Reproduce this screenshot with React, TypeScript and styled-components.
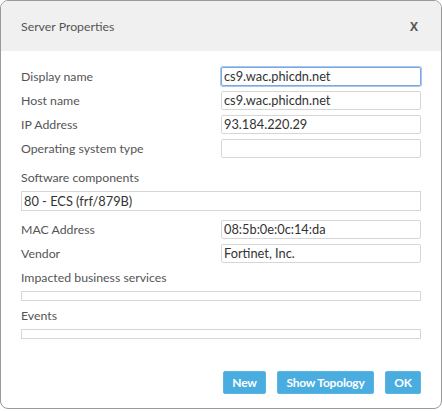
import styled, { createGlobalStyle } from "styled-components";

const GlobalStyle = createGlobalStyle`
  html, body {
    margin: 0;
    padding: 0;
    background: #ffffff;
  }
  body {
    font-family: Lato, "Open Sans", "Liberation Sans", sans-serif;
  }
`;

const Dialog = styled.div`
  width: 440px;
  height: 407px;
  border: 1px solid #999999;
  border-radius: 8px;
  overflow: hidden;
  background: #ffffff;
  display: flex;
  flex-direction: column;
`;

const Header = styled.div`
  height: 50px;
  flex: none;
  background: #f0f0f0;
  display: flex;
  align-items: center;
  justify-content: space-between;
  padding: 0 23px 0 20px;
  color: #555555;
  font-size: 12.3px;
`;

const CloseButton = styled.span`
  font-family: "Open Sans", "Liberation Sans", sans-serif;
  font-weight: bold;
  font-size: 12px;
  cursor: pointer;
`;

const Body = styled.div`
  padding: 16px 20px 0 20px;
  display: flex;
  flex-direction: column;
  flex: 1;
`;

const Row = styled.div`
  display: grid;
  grid-template-columns: 200px 200px;
  align-items: center;
  height: 19px;
  margin-bottom: 5px;
`;

const Label = styled.label<{ $top?: number }>`
  color: #555555;
  font-size: 12.3px;
  line-height: 19px;
  margin-top: ${(p) => p.$top ?? 0}px;
`;

const Input = styled.div<{ $focused?: boolean }>`
  box-sizing: border-box;
  height: 19px;
  border: 1px solid ${(p) => (p.$focused ? "#7aa7e0" : "#d6d6d6")};
  box-shadow: ${(p) => (p.$focused ? "0 0 0 1px #a9c7ee" : "none")};
  border-radius: 2px;
  padding: 0 2px;
  color: #333333;
  font-size: 12.8px;
  line-height: 17px;
  white-space: nowrap;
  overflow: hidden;
`;

const WideBox = styled.div<{ $height: number }>`
  box-sizing: border-box;
  height: ${(p) => p.$height}px;
  border: 1px solid #d6d6d6;
  margin-top: 4px;
  padding: 0 2px;
  color: #333333;
  font-size: 12.8px;
  line-height: 18px;
`;

const Spacer = styled.div`
  height: 9px;
`;

const Footer = styled.div`
  display: flex;
  justify-content: flex-end;
  gap: 11px;
  padding: 0 20px 14px 0;
  margin-top: auto;
`;

const Button = styled.button<{ $w: number }>`
  width: ${(p) => p.$w}px;
  height: 23px;
  border: 1px solid #5ab5e3;
  border-radius: 2px;
  background: #49ade0;
  color: #ffffff;
  font-family: Lato, "Open Sans", "Liberation Sans", sans-serif;
  font-weight: bold;
  font-size: 12px;
  letter-spacing: -0.2px;
  padding: 0;
  cursor: pointer;
`;

const fields = [
  { label: "Display name", value: "cs9.wac.phicdn.net", focused: true },
  { label: "Host name", value: "cs9.wac.phicdn.net" },
  { label: "IP Address", value: "93.184.220.29" },
  { label: "Operating system type", value: "" },
];

const vendorFields = [
  { label: "MAC Address", value: "08:5b:0e:0c:14:da" },
  { label: "Vendor", value: "Fortinet, Inc." },
];

export default function App() {
  return (
    <>
      <GlobalStyle />
      <Dialog>
        <Header>
          <span>Server Properties</span>
          <CloseButton>X</CloseButton>
        </Header>
        <Body>
          {fields.map((f) => (
            <Row key={f.label}>
              <Label>{f.label}</Label>
              <Input $focused={f.focused}>{f.value}</Input>
            </Row>
          ))}
          <Label $top={5}>Software components</Label>
          <WideBox $height={20}>80 - ECS (frf/879B)</WideBox>
          <Spacer />
          {vendorFields.map((f) => (
            <Row key={f.label}>
              <Label>{f.label}</Label>
              <Input>{f.value}</Input>
            </Row>
          ))}
          <Label>Impacted business services</Label>
          <WideBox $height={10} />
          <Label $top={5}>Events</Label>
          <WideBox $height={10} />
        </Body>
        <Footer>
          <Button $w={43}>New</Button>
          <Button $w={97}>Show Topology</Button>
          <Button $w={36}>OK</Button>
        </Footer>
      </Dialog>
    </>
  );
}
